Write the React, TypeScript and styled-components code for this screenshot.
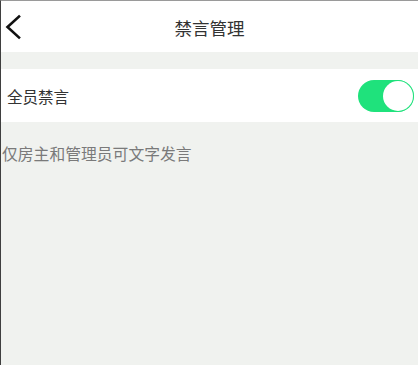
import React, { useState } from "react";
import styled, { createGlobalStyle } from "styled-components";

const Global = createGlobalStyle`
  html, body { margin: 0; padding: 0; }
  body {
    font-family: "Noto Sans CJK SC", "Noto Sans", sans-serif;
    background: #f0f2ef;
  }
`;

const Page = styled.div`
  height: 365px;
  box-sizing: border-box;
  background: #f0f2ef;
  border-left: 1.5px solid #3f3f3f;
  border-top: 1px solid #9a9a9a;
  display: flex;
  flex-direction: column;
  overflow: hidden;
`;

const Header = styled.header`
  height: 51px;
  background: #ffffff;
  display: grid;
  grid-template-columns: 60px 1fr 60px;
  align-items: center;
`;

const BackButton = styled.button`
  border: none;
  background: none;
  padding: 0 0 0 3px;
  height: 100%;
  display: flex;
  align-items: center;
  cursor: pointer;
`;

const Title = styled.h1`
  margin: 0;
  text-align: center;
  font-size: 17.5px;
  font-weight: 400;
  color: #333333;
  padding-top: 1px;
`;

const Gap = styled.div`
  height: 17px;
`;

const Row = styled.div`
  height: 53px;
  background: #ffffff;
  display: flex;
  align-items: center;
  justify-content: space-between;
  padding: 0 4px 0 6px;
`;

const Label = styled.span`
  font-size: 15.5px;
  color: #333333;
`;

const Track = styled.button<{ $on: boolean }>`
  width: 56px;
  height: 32px;
  border-radius: 16px;
  border: none;
  padding: 0;
  background: ${(p) => (p.$on ? "#1fe27c" : "#e5e5e5")};
  position: relative;
  cursor: pointer;
`;

const Knob = styled.span<{ $on: boolean }>`
  position: absolute;
  top: 1px;
  left: ${(p) => (p.$on ? "25px" : "1px")};
  width: 30px;
  height: 30px;
  border-radius: 50%;
  background: #ffffff;
  box-shadow: 0 0 0 1px rgba(31, 226, 124, 0.5);
`;

const Note = styled.p`
  margin: 0;
  padding: 21px 0 0 1px;
  font-size: 15.8px;
  line-height: 22px;
  color: #7a7a7a;
`;

export default function App() {
  const [on, setOn] = useState(true);
  return (
    <>
      <Global />
      <Page>
        <Header>
          <BackButton aria-label="返回">
            <svg width="20" height="26" viewBox="0 0 20 26">
              <path d="M15 2.5 L3.5 13 L15 23.5" fill="none" stroke="#111" strokeWidth="2.6" strokeLinecap="square" strokeLinejoin="miter" />
            </svg>
          </BackButton>
          <Title>禁言管理</Title>
          <span />
        </Header>
        <Gap />
        <Row>
          <Label>全员禁言</Label>
          <Track $on={on} onClick={() => setOn(!on)} aria-pressed={on}>
            <Knob $on={on} />
          </Track>
        </Row>
        <Note>仅房主和管理员可文字发言</Note>
      </Page>
    </>
  );
}
